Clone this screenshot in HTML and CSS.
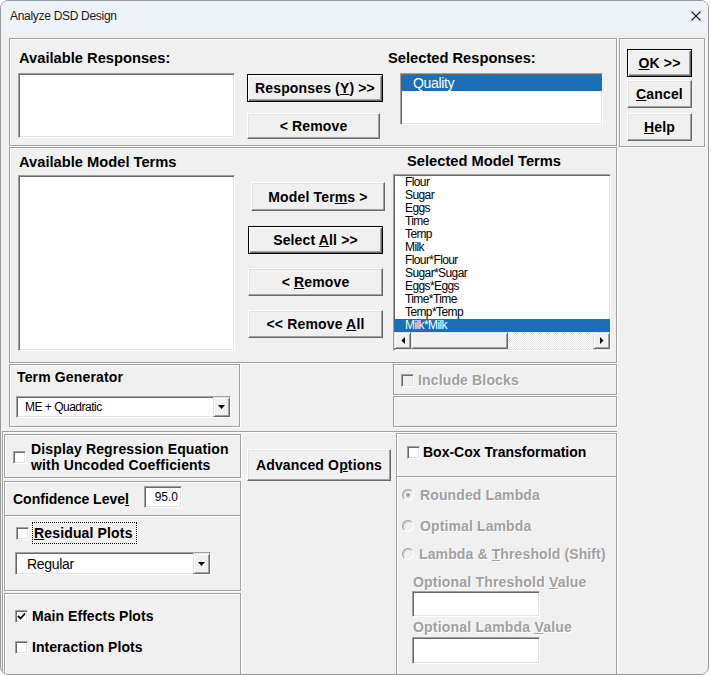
FILE: index.html
```html
<!DOCTYPE html>
<html lang="en">
<head>
<meta charset="utf-8">
<title>Analyze DSD Design</title>
<link rel="stylesheet" href="styles.css">
</head>
<body>
<div class="win">
  <div class="titlebar">
    <span class="title">Analyze DSD Design</span>
    <span class="close"><svg width="10" height="10" viewBox="0 0 10 10"><path d="M0.5 0.5L9.5 9.5M9.5 0.5L0.5 9.5" stroke="#1b1b1b" stroke-width="1.1" fill="none"/></svg></span>
  </div>
  <div class="client">
    <div class="row row-top">
      <div class="grp grp-resp">
        <div class="col c1">
          <div class="lbl lg pad1 m11">Available Responses:</div>
          <div class="list lb-avresp"></div>
        </div>
        <div class="col c2">
          <button type="button" class="btn def b-resp"><span>Responses (<u>Y</u>) &gt;&gt;</span></button>
          <button type="button" class="btn b-rem1"><span>&lt; Remove</span></button>
        </div>
        <div class="col c3">
          <div class="lbl lg m11">Selected Responses:</div>
          <div class="list lb-selresp"><div class="qitem sel">Quality</div></div>
        </div>
      </div>
      <div class="grp grp-ok">
        <button type="button" class="btn def b-ok"><span><u>O</u>K &gt;&gt;</span></button>
        <button type="button" class="btn b-cancel"><span><u>C</u>ancel</span></button>
        <button type="button" class="btn b-help"><span><u>H</u>elp</span></button>
      </div>
    </div>

    <div class="grp grp-terms">
      <div class="col c1">
        <div class="lbl lg pad1 m6">Available Model Terms</div>
        <div class="list lb-avterms"></div>
      </div>
      <div class="col c2b">
        <button type="button" class="btn b-mterms"><span>Model Ter<u>m</u>s &gt;</span></button>
        <button type="button" class="btn def b-selall"><span>Select <u>A</u>ll &gt;&gt;</span></button>
        <button type="button" class="btn b-rem2"><span>&lt; <u>R</u>emove</span></button>
        <button type="button" class="btn b-remall"><span>&lt;&lt; Remove <u>A</u>ll</span></button>
      </div>
      <div class="col c3b">
        <div class="lbl lg m5 pad14">Selected Model Terms</div>
        <div class="list lb-selterms">
          <div class="items">
            <div class="term">Flour</div>
            <div class="term">Sugar</div>
            <div class="term">Eggs</div>
            <div class="term">Time</div>
            <div class="term">Temp</div>
            <div class="term">Milk</div>
            <div class="term">Flour*Flour</div>
            <div class="term">Sugar*Sugar</div>
            <div class="term">Eggs*Eggs</div>
            <div class="term">Time*Time</div>
            <div class="term">Temp*Temp</div>
            <div class="term sel">Milk*Milk</div>
          </div>
          <div class="hscroll">
            <div class="sbtn"><svg width="4" height="7" viewBox="0 0 4 7"><path d="M4 0V7L0.5 3.5Z" fill="#000"/></svg></div>
            <div class="sthumb"></div>
            <div class="strack"></div>
            <div class="sbtn"><svg width="4" height="7" viewBox="0 0 4 7"><path d="M0 0V7L3.5 3.5Z" fill="#000"/></svg></div>
          </div>
        </div>
      </div>
    </div>

    <div class="row row-mid">
      <div class="grp grp-tg">
        <div class="lbl tg-lbl">Term Generator</div>
        <div class="combo combo-tg">
          <span class="ctext small">ME + Quadratic</span>
          <span class="cbtn"><svg width="7" height="4" viewBox="0 0 7 4"><path d="M0 0H7L3.5 4Z" fill="#000"/></svg></span>
        </div>
      </div>
      <div class="rcol">
        <div class="grp grp-blk">
          <div class="chkrow blk-row">
            <span class="cb dis-cb"></span>
            <span class="lbl dis">Include Blocks</span>
          </div>
        </div>
        <div class="grp grp-empty"></div>
      </div>
    </div>

    <div class="lower">
      <div class="outer">
        <div class="lcol">
          <div class="grp grp-f">
            <div class="chkrow f-row">
              <span class="cb"></span>
              <span class="lbl two">Display Regression Equation<br>with Uncoded Coefficients</span>
            </div>
          </div>
          <div class="grp grp-g">
            <div class="conf-row">
              <span class="lbl conf-lbl">Confidence Leve<u>l</u></span>
              <span class="tbox conf-box">95.0</span>
            </div>
            <div class="divider"></div>
            <div class="chkrow res-row">
              <span class="cb"></span>
              <span class="focus"><span class="lbl"><u>R</u>esidual Plots</span></span>
            </div>
            <div class="combo combo-res">
              <span class="ctext reg">Regular</span>
              <span class="cbtn"><svg width="7" height="4" viewBox="0 0 7 4"><path d="M0 0H7L3.5 4Z" fill="#000"/></svg></span>
            </div>
          </div>
          <div class="grp grp-h">
            <div class="chkrow h-row1">
              <span class="cb"><svg width="9" height="8" viewBox="0 0 9 8"><path d="M1 4L3.5 6.5L8 1.5" stroke="#000" stroke-width="1.8" fill="none"/></svg></span>
              <span class="lbl">Main Effects Plots</span>
            </div>
            <div class="chkrow h-row2">
              <span class="cb"></span>
              <span class="lbl">Interaction Plots</span>
            </div>
          </div>
        </div>
        <div class="mcol">
          <button type="button" class="btn b-adv"><span>Advanced O<u>p</u>tions</span></button>
        </div>
        <div class="grp grp-bc">
          <div class="chkrow bc-row">
            <span class="cb"></span>
            <span class="lbl">Box-Cox Transformation</span>
          </div>
          <div class="divider"></div>
          <div class="chkrow rad-row r1">
            <span class="rb"><span class="dot"></span></span>
            <span class="lbl dis">Rounded Lambda</span>
          </div>
          <div class="chkrow rad-row r2">
            <span class="rb"></span>
            <span class="lbl dis">Optimal Lambda</span>
          </div>
          <div class="chkrow rad-row r3">
            <span class="rb"></span>
            <span class="lbl dis">Lambda &amp; <u>T</u>hreshold (Shift)</span>
          </div>
          <div class="lbl dis opt-lbl lbl-th">Optional Threshold <u>V</u>alue</div>
          <div class="tbox opt-box box-th"></div>
          <div class="lbl dis opt-lbl lbl-lam">Optional Lambda <u>V</u>alue</div>
          <div class="tbox opt-box box-lam"></div>
        </div>
      </div>
    </div>
  </div>
</div>
</body>
</html>
```

FILE: styles.css
```css
* { box-sizing: border-box; margin: 0; padding: 0; }
html, body { width: 711px; height: 675px; overflow: hidden; background: #ffffff; }
body { font-family: "Liberation Sans", Arial, sans-serif; color: #000; }

.win {
  width: 709px; height: 675px;
  background: #f0f0f0;
  border: 1px solid #9a9a9a;
  border-radius: 8px;
  overflow: hidden;
  display: flex; flex-direction: column;
}
.titlebar {
  flex: none; height: 30px;
  background: #eef3f9;
  display: flex; align-items: center; justify-content: space-between;
  padding: 0 7px 0 9px;
}
.title { font-size: 12px; line-height: 14px; letter-spacing: -0.3px; color: #1a1a1a; }
.close { display: flex; width: 10px; height: 10px; }

.client { flex: 1; display: flex; flex-direction: column; }
.row { display: flex; flex: none; }
.col { display: flex; flex-direction: column; flex: none; }

/* etched group frame */
.grp {
  flex: none;
  border: 1px solid #a0a0a0;
  box-shadow: inset 1px 1px 0 #fff, 1px 1px 0 #fff;
}

/* labels */
.lbl { display: block; font-weight: bold; font-size: 14px; line-height: 16px; height: 16px; letter-spacing: 0.15px; white-space: nowrap; }
.lbl.lg { font-size: 14.7px; letter-spacing: 0; }
.lbl.two { height: 32px; }
.pad1 { padding-left: 1px; }
.pad14 { padding-left: 14px; }
.m11 { margin-top: 11px; }
.m6 { margin-top: 6px; }
.m5 { margin-top: 5px; }
.dis { color: #a0a0a0; text-shadow: 1px 1px 0 #fff; }

/* buttons */
.btn {
  flex: none;
  display: flex; align-items: center; justify-content: center;
  background: #f0f0f0;
  border: 1px solid; border-color: #fff #696969 #696969 #fff;
  box-shadow: inset -1px -1px 0 #a0a0a0, inset 1px 1px 0 #e3e3e3;
  font: bold 14px/16px "Liberation Sans", Arial, sans-serif;
  letter-spacing: 0.15px; color: #000; white-space: nowrap;
}
.btn > span { white-space: pre; }
.btn.def {
  border-color: #000;
  box-shadow: inset 1px 1px 0 #fff, inset -1px -1px 0 #696969, inset -2px -2px 0 #a0a0a0;
}

/* list boxes / text boxes */
.list, .tbox, .combo {
  flex: none;
  background: #fff;
  border: 1px solid; border-color: #a0a0a0 #fff #fff #a0a0a0;
  box-shadow: inset 1px 1px 0 #696969, inset -1px -1px 0 #e3e3e3;
}
.sel { background: #1a6fb7; color: #fff; }

/* top row */
.row-top { margin-top: 7px; height: 109px; }
.grp-resp { margin-left: 8px; width: 608px; height: 108px; display: flex; }
.c1 { margin-left: 8px; width: 217px; }
.lb-avresp { margin-top: 7px; height: 65px; }
.c2 { margin-left: 12px; width: 136px; }
.b-resp { margin-top: 35px; width: 136px; height: 28px; }
.b-rem1 { margin-top: 11px; width: 133px; height: 26px; }
.c3 { margin-left: 5px; width: 215px; }
.lb-selresp { margin-top: 7px; margin-left: 12px; width: 203px; height: 52px; padding-top: 1px; }
.qitem { height: 16px; font-size: 14px; line-height: 16px; letter-spacing: -0.35px; padding-left: 12px; }

.grp-ok { margin-left: 2px; width: 86px; height: 109px; display: flex; flex-direction: column; padding-left: 7px; }
.grp-ok .btn { width: 65px; height: 28px; }
.b-ok { margin-top: 10px; }
.b-cancel { margin-top: 3px; }
.b-help { margin-top: 5px; }

/* model terms */
.grp-terms { margin-left: 8px; width: 608px; height: 216px; display: flex; }
.lb-avterms { margin-top: 5px; height: 176px; }
.c2b { margin-left: 13px; width: 136px; }
.b-mterms { margin-top: 34px; margin-left: 3px; width: 134px; height: 29px; }
.b-selall { margin-top: 15px; width: 135px; height: 28px; }
.b-rem2 { margin-top: 14px; width: 135px; height: 28px; }
.b-remall { margin-top: 14px; width: 135px; height: 28px; }
.c3b { margin-left: 9px; width: 218px; }
.lb-selterms { margin-top: 5px; height: 177px; display: flex; flex-direction: column; }
.items { padding-top: 1px; }
.term {
  height: 13px; font-size: 12px; line-height: 13px; letter-spacing: -0.6px;
  padding-left: 11px; white-space: nowrap;
}
.hscroll { display: flex; height: 17px; }
.sbtn, .sthumb, .cbtn {
  flex: none;
  background: #f0f0f0;
  border: 1px solid; border-color: #e3e3e3 #696969 #696969 #e3e3e3;
  box-shadow: inset 1px 1px 0 #fff, inset -1px -1px 0 #a0a0a0;
  display: flex; align-items: center; justify-content: center;
}
.sbtn { width: 17px; height: 17px; }
.sthumb { width: 97px; height: 17px; }
.strack {
  flex: 1; height: 17px;
  background-color: #fff;
  background-image: conic-gradient(#fff 25%, #e4e4e4 0 50%, #fff 0 75%, #e4e4e4 0);
  background-size: 2px 2px;
}

/* middle row */
.row-mid { margin-top: 1px; height: 63px; }
.grp-tg { margin-left: 8px; width: 231px; height: 63px; }
.tg-lbl { margin-top: 4px; margin-left: 7px; }
.combo { display: flex; align-items: center; }
.combo-tg { margin-top: 11px; margin-left: 6px; width: 215px; height: 22px; padding-left: 8px; }
.combo-tg .cbtn { width: 17px; height: 20px; margin-left: auto; }
.ctext { white-space: nowrap; }
.small { font-size: 12px; line-height: 14px; letter-spacing: -0.5px; }
.reg { font-size: 14px; line-height: 16px; letter-spacing: -0.3px; }

.rcol { margin-left: 153px; width: 224px; display: flex; flex-direction: column; }
.grp-blk { height: 31px; }
.grp-empty { margin-top: 1px; height: 31px; }
.chkrow { display: flex; align-items: center; }
.blk-row { margin-top: 7px; height: 16px; padding-left: 7px; }
.blk-row .lbl { margin-left: 4px; }

/* checkbox / radio */
.cb {
  flex: none; width: 13px; height: 13px;
  background: #fff;
  border: 1px solid; border-color: #a0a0a0 #fff #fff #a0a0a0;
  box-shadow: inset 1px 1px 0 #696969, inset -1px -1px 0 #e3e3e3;
  display: flex; align-items: center; justify-content: center;
}
.cb.dis-cb { background: #f0f0f0; }
.rb {
  flex: none; width: 12px; height: 12px; border-radius: 50%;
  background: #f0f0f0;
  border: 1px solid; border-color: #a0a0a0 #fff #fff #a0a0a0;
  box-shadow: inset 1px 1px 0 #c8c8c8;
  display: flex; align-items: center; justify-content: center;
}
.dot { width: 4px; height: 4px; border-radius: 50%; background: #a0a0a0; }

/* lower section */
.lower { margin-top: 4px; flex: 1; display: flex; overflow: hidden; }
.outer {
  margin-left: 1px; width: 615px; height: 260px;
  border-top: 1px solid #a0a0a0; border-left: 1px solid #a0a0a0;
  box-shadow: inset 1px 1px 0 #fff;
  padding: 2px 0 0 1px;
  display: flex;
}
.lcol { width: 237px; flex: none; display: flex; flex-direction: column; }
.grp-f { height: 44px; }
.f-row { margin-top: 6px; padding-left: 8px; height: 32px; }
.f-row .lbl { margin-left: 5px; }
.grp-g { margin-top: 3px; height: 110px; display: flex; flex-direction: column; }
.conf-row { display: flex; margin-top: 4px; height: 22px; }
.conf-lbl { margin-left: 8px; margin-top: 5px; width: 131px; letter-spacing: 0; }
.tbox { display: flex; align-items: center; }
.conf-box { width: 38px; height: 22px; justify-content: flex-end; padding-right: 3px; font-size: 12px; line-height: 14px; }
.divider { flex: none; height: 2px; border-top: 1px solid #a0a0a0; border-bottom: 1px solid #fff; }
.grp-g .divider { margin-top: 7px; }
.res-row { margin-top: 5px; height: 22px; padding-left: 11px; }
.focus { margin-left: 3px; width: 105px; height: 22px; border: 1px dotted #000; padding: 2px 0 2px 1px; }
.combo-res { margin-top: 8px; margin-left: 10px; width: 196px; height: 23px; padding-left: 11px; }
.combo-res .cbtn { width: 17px; height: 21px; margin-left: auto; }
.grp-h { margin-top: 2px; height: 90px; }
.h-row1 { margin-top: 14px; height: 16px; padding-left: 10px; }
.h-row2 { margin-top: 15px; height: 16px; padding-left: 10px; }
.grp-h .lbl { margin-left: 4px; letter-spacing: 0.05px; }

.mcol { width: 155px; flex: none; }
.b-adv { margin: 15px 0 0 6px; width: 144px; height: 32px; }

.grp-bc { width: 221px; height: 244px; margin-top: -1px; display: flex; flex-direction: column; }
.bc-row { margin-top: 10px; height: 16px; padding-left: 10px; }
.bc-row .lbl { margin-left: 3px; letter-spacing: 0; }
.grp-bc .divider { margin-top: 16px; }
.rad-row { height: 16px; padding-left: 5px; }
.rad-row .lbl { margin-left: 6px; letter-spacing: 0.12px; }
.r1 { margin-top: 9px; }
.r2 { margin-top: 15px; }
.r3 { margin-top: 12px; }
.rad-row.r3 .lbl { margin-left: 5px; }
.opt-lbl { margin-left: 16px; letter-spacing: 0.2px; }
.lbl-th { margin-top: 12px; }
.opt-box { margin-left: 15px; width: 128px; }
.box-th { margin-top: 1px; height: 26px; }
.lbl-lam { margin-top: 2px; }
.box-lam { margin-top: 2px; height: 27px; }
```
